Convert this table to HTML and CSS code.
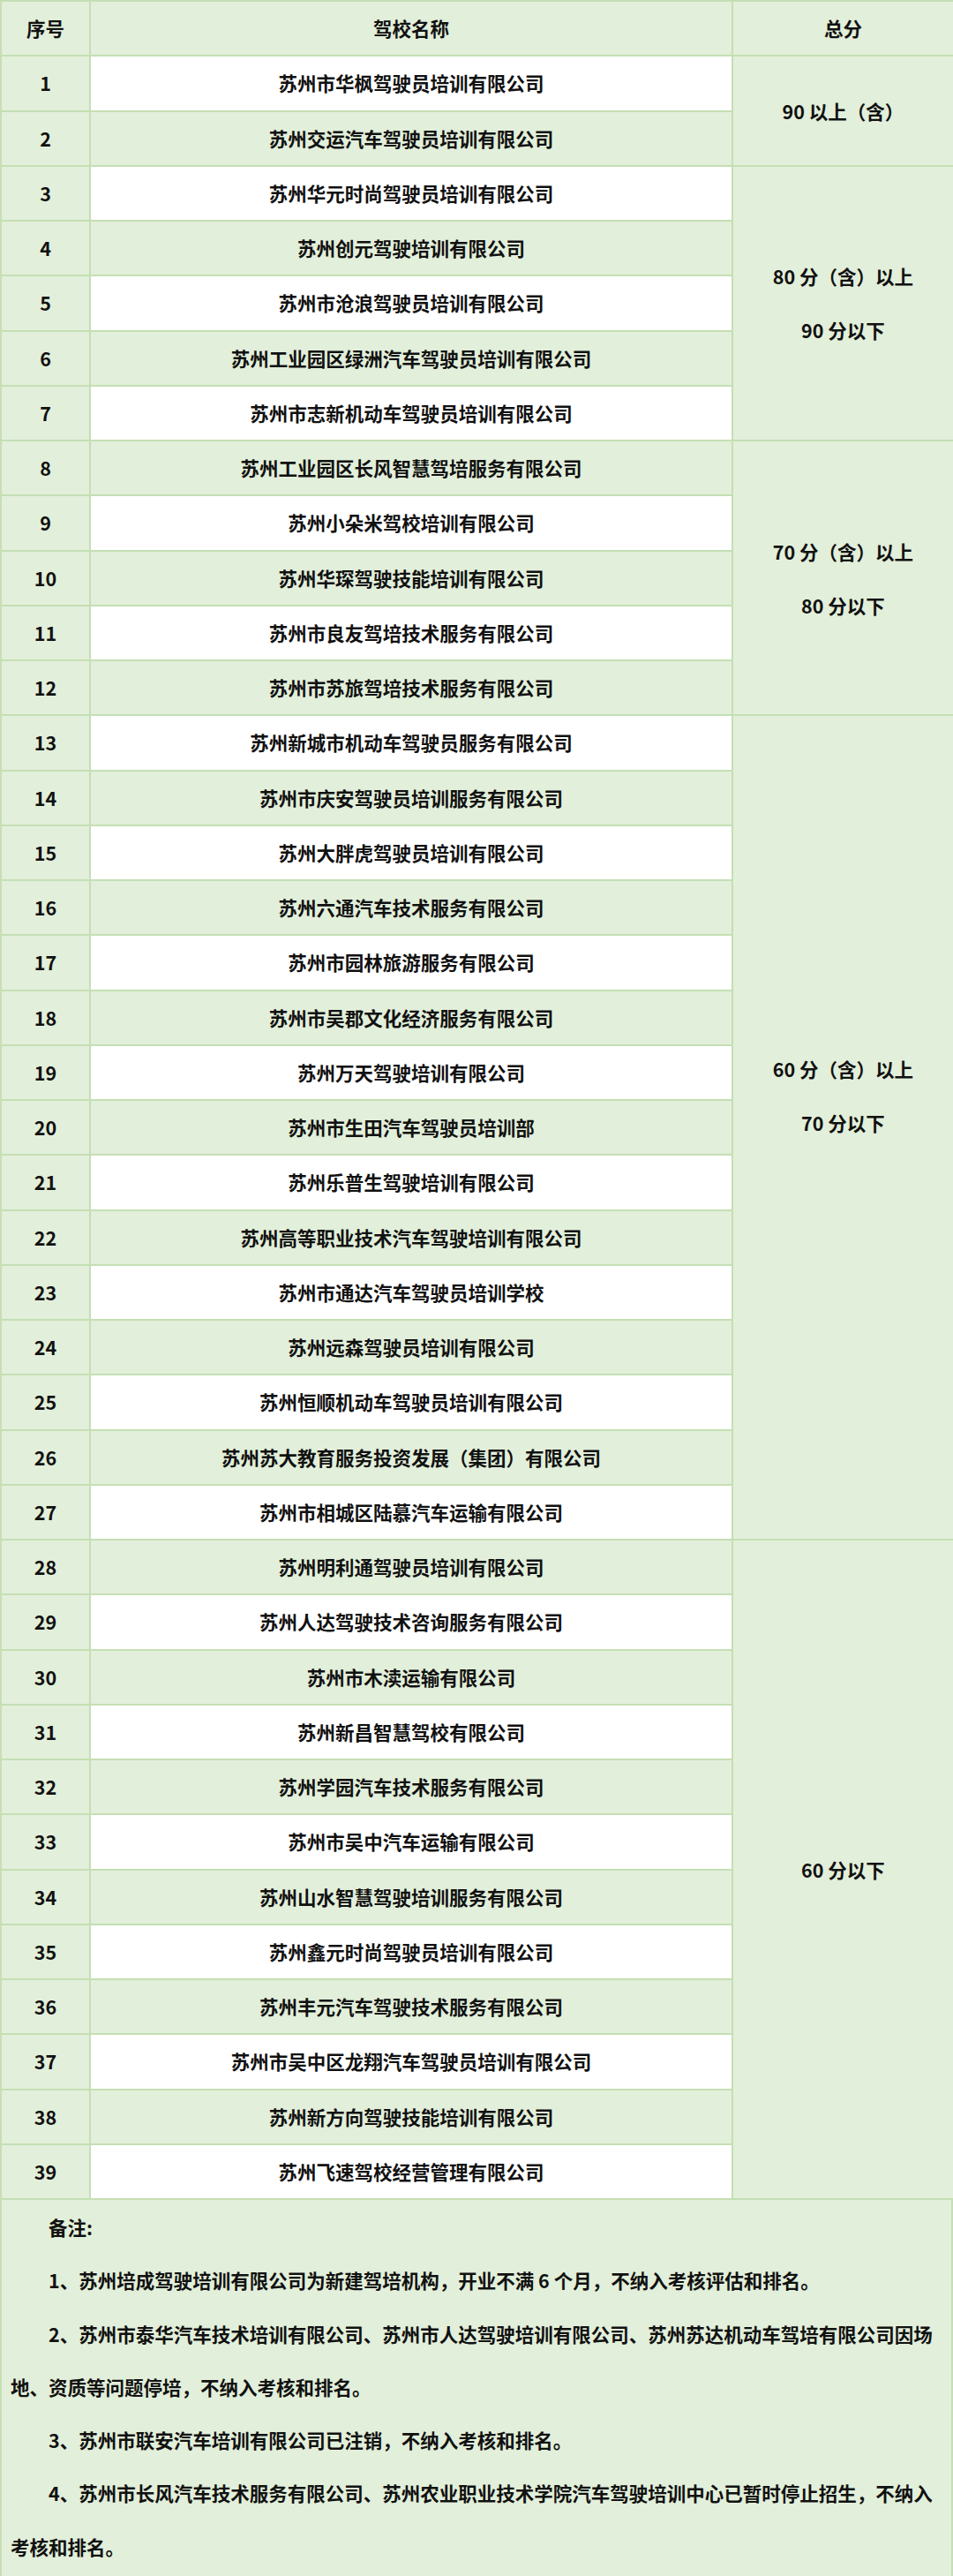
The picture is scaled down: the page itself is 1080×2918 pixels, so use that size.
FILE: index.html
```html
<!DOCTYPE html>
<html lang="zh-CN">
<head>
<meta charset="utf-8">
<title>驾校考核</title>
<link rel="stylesheet" href="styles.css">
</head>
<body>
<table class="grid">
  <colgroup><col class="c-no"><col class="c-name"><col class="c-score"></colgroup>
  <tr class="head"><th>序号</th><th>驾校名称</th><th>总分</th></tr>
  <tr class="odd"><td>1</td><td class="name">苏州市华枫驾驶员培训有限公司</td><td class="score" rowspan="2">90 以上（含）</td></tr>
  <tr class="even"><td>2</td><td class="name">苏州交运汽车驾驶员培训有限公司</td></tr>
  <tr class="odd"><td>3</td><td class="name">苏州华元时尚驾驶员培训有限公司</td><td class="score" rowspan="5"><div class="ln">80 分（含）以上</div><div class="ln">90 分以下</div></td></tr>
  <tr class="even"><td>4</td><td class="name">苏州创元驾驶培训有限公司</td></tr>
  <tr class="odd"><td>5</td><td class="name">苏州市沧浪驾驶员培训有限公司</td></tr>
  <tr class="even"><td>6</td><td class="name">苏州工业园区绿洲汽车驾驶员培训有限公司</td></tr>
  <tr class="odd"><td>7</td><td class="name">苏州市志新机动车驾驶员培训有限公司</td></tr>
  <tr class="even"><td>8</td><td class="name">苏州工业园区长风智慧驾培服务有限公司</td><td class="score" rowspan="5"><div class="ln">70 分（含）以上</div><div class="ln">80 分以下</div></td></tr>
  <tr class="odd"><td>9</td><td class="name">苏州小朵米驾校培训有限公司</td></tr>
  <tr class="even"><td>10</td><td class="name">苏州华琛驾驶技能培训有限公司</td></tr>
  <tr class="odd"><td>11</td><td class="name">苏州市良友驾培技术服务有限公司</td></tr>
  <tr class="even"><td>12</td><td class="name">苏州市苏旅驾培技术服务有限公司</td></tr>
  <tr class="odd"><td>13</td><td class="name">苏州新城市机动车驾驶员服务有限公司</td><td class="score raised" rowspan="15"><div class="ln">60 分（含）以上</div><div class="ln">70 分以下</div></td></tr>
  <tr class="even"><td>14</td><td class="name">苏州市庆安驾驶员培训服务有限公司</td></tr>
  <tr class="odd"><td>15</td><td class="name">苏州大胖虎驾驶员培训有限公司</td></tr>
  <tr class="even"><td>16</td><td class="name">苏州六通汽车技术服务有限公司</td></tr>
  <tr class="odd"><td>17</td><td class="name">苏州市园林旅游服务有限公司</td></tr>
  <tr class="even"><td>18</td><td class="name">苏州市吴郡文化经济服务有限公司</td></tr>
  <tr class="odd"><td>19</td><td class="name">苏州万天驾驶培训有限公司</td></tr>
  <tr class="even"><td>20</td><td class="name">苏州市生田汽车驾驶员培训部</td></tr>
  <tr class="odd"><td>21</td><td class="name">苏州乐普生驾驶培训有限公司</td></tr>
  <tr class="even"><td>22</td><td class="name">苏州高等职业技术汽车驾驶培训有限公司</td></tr>
  <tr class="odd"><td>23</td><td class="name">苏州市通达汽车驾驶员培训学校</td></tr>
  <tr class="even"><td>24</td><td class="name">苏州远森驾驶员培训有限公司</td></tr>
  <tr class="odd"><td>25</td><td class="name">苏州恒顺机动车驾驶员培训有限公司</td></tr>
  <tr class="even"><td>26</td><td class="name">苏州苏大教育服务投资发展（集团）有限公司</td></tr>
  <tr class="odd"><td>27</td><td class="name">苏州市相城区陆慕汽车运输有限公司</td></tr>
  <tr class="even"><td>28</td><td class="name">苏州明利通驾驶员培训有限公司</td><td class="score" rowspan="12">60 分以下</td></tr>
  <tr class="odd"><td>29</td><td class="name">苏州人达驾驶技术咨询服务有限公司</td></tr>
  <tr class="even"><td>30</td><td class="name">苏州市木渎运输有限公司</td></tr>
  <tr class="odd"><td>31</td><td class="name">苏州新昌智慧驾校有限公司</td></tr>
  <tr class="even"><td>32</td><td class="name">苏州学园汽车技术服务有限公司</td></tr>
  <tr class="odd"><td>33</td><td class="name">苏州市吴中汽车运输有限公司</td></tr>
  <tr class="even"><td>34</td><td class="name">苏州山水智慧驾驶培训服务有限公司</td></tr>
  <tr class="odd"><td>35</td><td class="name">苏州鑫元时尚驾驶员培训有限公司</td></tr>
  <tr class="even"><td>36</td><td class="name">苏州丰元汽车驾驶技术服务有限公司</td></tr>
  <tr class="odd"><td>37</td><td class="name">苏州市吴中区龙翔汽车驾驶员培训有限公司</td></tr>
  <tr class="even"><td>38</td><td class="name">苏州新方向驾驶技能培训有限公司</td></tr>
  <tr class="odd"><td>39</td><td class="name">苏州飞速驾校经营管理有限公司</td></tr>
</table>
<div class="notes">
  <p>备注:</p>
  <p>1、苏州培成驾驶培训有限公司为新建驾培机构，开业不满 6 个月，不纳入考核评估和排名。</p>
  <p>2、苏州市泰华汽车技术培训有限公司、苏州市人达驾驶培训有限公司、苏州苏达机动车驾培有限公司因场地、资质等问题停培，不纳入考核和排名。</p>
  <p>3、苏州市联安汽车培训有限公司已注销，不纳入考核和排名。</p>
  <p>4、苏州市长风汽车技术服务有限公司、苏州农业职业技术学院汽车驾驶培训中心已暂时停止招生，不纳入考核和排名。</p>
</div>
</body>
</html>
```

FILE: styles.css
```css
html, body {
  margin: 0;
  padding: 0;
  background: #e2efda;
}
body {
  width: 1080px;
  font-family: "Noto Sans CJK SC", "Noto Sans", sans-serif;
  font-weight: 700;
  font-size: 21.5px;
  color: #111;
}
.grid {
  width: 1080px;
  border-collapse: collapse;
  table-layout: fixed;
  border: 2px solid #c5dfb4;
}
.c-no { width: 101px; }
.c-name { width: 728px; }
.c-score { width: 251px; }
.grid th, .grid td {
  border: 2px solid #c5dfb4;
  background: #e2efda;
  text-align: center;
  vertical-align: middle;
  padding: 0;
  font-weight: 700;
  line-height: 28px;
}
.grid tr { height: 62.25px; }
.grid tr.odd td.name { background: #ffffff; }
.score .ln { line-height: 61px; }
.grid td.raised { padding-bottom: 72px; }
.notes {
  border: 2px solid #c5dfb4;
  border-top: none;
  padding: 1px 10px 3px 10px;
  line-height: 60.3px;
}
.notes p {
  margin: 0;
  text-indent: 2em;
}
```
